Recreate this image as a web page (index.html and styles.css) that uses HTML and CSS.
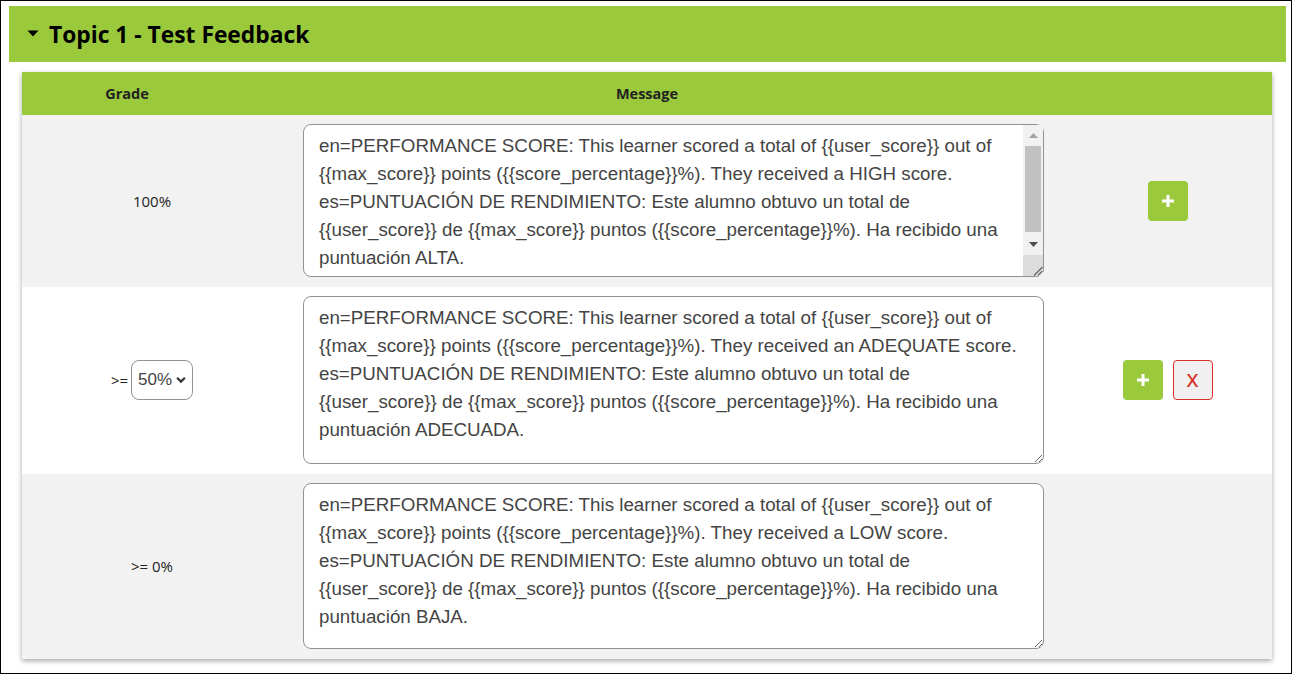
FILE: index.html
```html
<!DOCTYPE html>
<html>
<head>
<meta charset="utf-8">
<link rel="stylesheet" href="styles.css">
</head>
<body>
<div class="frame">
  <div class="topic-bar">
    <svg class="caret" width="12" height="8" viewBox="0 0 12 8"><path d="M0.5 1.5h11L6 7.5z" fill="#000"/></svg>
    <h1 class="topic-title">Topic 1 - Test Feedback</h1>
  </div>
  <div class="card">
    <div class="head-row">
      <div class="hcell h-grade">Grade</div>
      <div class="hcell h-msg">Message</div>
      <div class="hcell h-act"></div>
    </div>
    <div class="row row-grey">
      <div class="grade">100%</div>
      <div class="msg">
        <div class="ta-wrap">
          <textarea class="ta ta-1">en=PERFORMANCE SCORE: This learner scored a total of {{user_score}} out of {{max_score}} points ({{score_percentage}}%). They received a HIGH score.
es=PUNTUACIÓN DE RENDIMIENTO: Este alumno obtuvo un total de {{user_score}} de {{max_score}} puntos ({{score_percentage}}%). Ha recibido una puntuación ALTA.
</textarea>
          <div class="vscroll">
            <div class="sb-btn sb-up"><svg width="9" height="5" viewBox="0 0 9 5"><path d="M0 5h9L4.5 0z" fill="#a3a3a3"/></svg></div>
            <div class="sb-track"><div class="sb-thumb"></div></div>
            <div class="sb-btn sb-down"><svg width="9" height="5" viewBox="0 0 9 5"><path d="M0 0h9L4.5 5z" fill="#505050"/></svg></div>
            <div class="sb-corner"><svg width="11" height="11" viewBox="0 0 11 11"><path d="M2 10.5L10.5 2M6 10.5L10.5 6" stroke="#666" stroke-width="1.2"/></svg></div>
          </div>
        </div>
      </div>
      <div class="actions"><button class="btn-add"><svg width="12" height="12" viewBox="0 0 12 12"><path d="M4.5 0h3v4.5H12v3H7.5V12h-3V7.5H0v-3h4.5z" fill="#fff"/></svg></button></div>
    </div>
    <div class="row row-white">
      <div class="grade">&gt;= <div class="sel"><span>50%</span><svg width="11" height="8" viewBox="0 0 11 8"><path d="M1.2 1.5l4.3 4.3 4.3-4.3" fill="none" stroke="#333" stroke-width="2.4"/></svg></div></div>
      <div class="msg"><textarea class="ta ta-2">en=PERFORMANCE SCORE: This learner scored a total of {{user_score}} out of {{max_score}} points ({{score_percentage}}%). They received an ADEQUATE score.
es=PUNTUACIÓN DE RENDIMIENTO: Este alumno obtuvo un total de {{user_score}} de {{max_score}} puntos ({{score_percentage}}%). Ha recibido una puntuación ADECUADA.</textarea></div>
      <div class="actions"><button class="btn-add"><svg width="12" height="12" viewBox="0 0 12 12"><path d="M4.5 0h3v4.5H12v3H7.5V12h-3V7.5H0v-3h4.5z" fill="#fff"/></svg></button><button class="btn-del">x</button></div>
    </div>
    <div class="row row-grey">
      <div class="grade">&gt;= 0%</div>
      <div class="msg"><textarea class="ta ta-3">en=PERFORMANCE SCORE: This learner scored a total of {{user_score}} out of {{max_score}} points ({{score_percentage}}%). They received a LOW score.
es=PUNTUACIÓN DE RENDIMIENTO: Este alumno obtuvo un total de {{user_score}} de {{max_score}} puntos ({{score_percentage}}%). Ha recibido una puntuación BAJA.</textarea></div>
      <div class="actions"></div>
    </div>
  </div>
</div>
</body>
</html>
```

FILE: styles.css
```css
html, body {
  margin: 0;
  padding: 0;
  background: #fff;
}
.frame {
  width: 1292px;
  height: 674px;
  box-sizing: border-box;
  border: 1px solid #000;
  padding: 5px 0 0 8px;
  font-family: "Liberation Sans", Arial, sans-serif;
}
.topic-bar {
  width: 1277px;
  height: 56px;
  background: #9bc93c;
  display: flex;
  align-items: center;
  padding-left: 18px;
  box-sizing: border-box;
}
.caret {
  display: block;
  margin-right: 10px;
  margin-top: -2px;
}
.topic-title {
  margin: 0;
  font-family: "Open Sans", sans-serif;
  font-weight: 700;
  font-size: 22.8px;
  color: #000;
}
.card {
  margin: 10px 0 0 13px;
  width: 1250px;
  box-shadow: 0 2px 5px rgba(0,0,0,0.35);
}
.head-row {
  display: grid;
  grid-template-columns: 210px 830px 210px;
  height: 43px;
  background: #9bc93c;
  align-items: center;
}
.hcell {
  text-align: center;
  font-family: "Open Sans", sans-serif;
  font-weight: 700;
  font-size: 14.5px;
  color: #222;
}
.row {
  display: grid;
  grid-template-columns: 260px 781px 209px;
  align-items: center;
  padding: 9px 0 10px;
}
.row-grey { background: #f2f2f2; }
.row-white { background: #fff; }
.grade {
  display: flex;
  align-items: center;
  justify-content: center;
  font-family: "Open Sans", sans-serif;
  font-size: 15px;
  color: #222;
  gap: 3px;
}
.sel {
  display: flex;
  align-items: center;
  gap: 4px;
  height: 40px;
  width: 62px;
  box-sizing: border-box;
  border: 1px solid #8d939a;
  border-radius: 8px;
  padding: 0 6px 0 6px;
  font-family: "Liberation Sans", Arial, sans-serif;
  font-size: 17px;
  color: #444;
  background: #fff;
}
.msg {
  padding-left: 21px;
}
.ta-wrap {
  position: relative;
  width: 741px;
}
.ta {
  display: block;
  width: 741px;
  box-sizing: border-box;
  border: 1px solid #8d939a;
  border-radius: 8px;
  padding: 7px 15px;
  font-family: "Liberation Sans", Arial, sans-serif;
  font-size: 18.75px;
  line-height: 28px;
  color: #444;
  background: #fff;
  resize: vertical;
  margin: 0;
  overflow: hidden;
}
.ta-1 {
  height: 153px;
  padding-right: 32px;
  resize: none;
}
.vscroll {
  position: absolute;
  top: 1px;
  right: 1px;
  bottom: 1px;
  width: 20px;
  display: flex;
  flex-direction: column;
  background: #f1f1f1;
}
.sb-btn {
  display: flex;
  align-items: center;
  justify-content: center;
}
.sb-up { height: 20px; }
.sb-down { height: 21px; }
.sb-track {
  flex: 1;
  padding: 1px 0 2px;
  display: flex;
  flex-direction: column;
}
.sb-thumb {
  flex: 1;
  background: #c1c1c1;
  margin: 0 2px;
}
.sb-corner {
  height: 21px;
  background: #dcdcdc;
  display: flex;
  align-items: flex-end;
  justify-content: flex-end;
  border-bottom-right-radius: 7px;
}
.ta-2 { height: 168px; }
.ta-3 { height: 166px; }
.actions {
  display: flex;
  justify-content: center;
  gap: 10px;
}
.btn-add {
  width: 40px;
  height: 40px;
  border: none;
  border-radius: 4px;
  background: #9bc93c;
  display: flex;
  align-items: center;
  justify-content: center;
  padding: 0;
}
.btn-del {
  width: 40px;
  height: 40px;
  box-sizing: border-box;
  border: 1px solid #d9302c;
  border-radius: 4px;
  background: #f0f0f0;
  color: #d9302c;
  font-family: "Liberation Sans", Arial, sans-serif;
  font-size: 24px;
  line-height: 24px;
  padding: 0 0 3px;
}
```
